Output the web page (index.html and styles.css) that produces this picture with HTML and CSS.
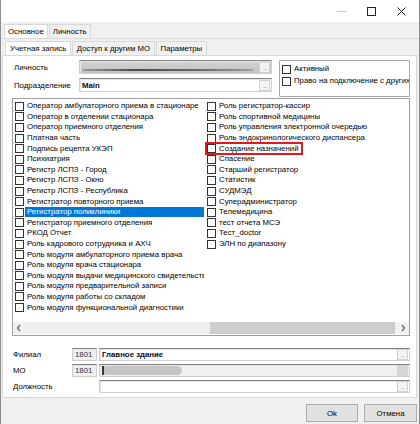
FILE: index.html
```html
<!DOCTYPE html>
<html lang="ru">
  <head>
    <meta charset="UTF-8" />
    <title>Пользователь</title>
    <link rel="stylesheet" href="styles.css">
  </head>
  <body>
    <div class="window">
      <div class="titlebar">
        <span class="wbtn"><svg viewBox="0 0 9 9"><path d="M0 4.5h9" stroke="#c4c4c4" /></svg></span>
        <span class="wbtn"><svg viewBox="0 0 9 9"><rect x="0.5" y="0.5" width="8" height="8" fill="none" stroke="#222" /></svg></span>
        <span class="wbtn"><svg viewBox="0 0 9 9"><path d="M0.5 0.5l8 8M8.5 0.5l-8 8" stroke="#222" /></svg></span>
      </div>

      <div class="tabs outer-tabs">
        <div class="tab active">Основное</div>
        <div class="tab">Личность</div>
      </div>

      <div class="outer-page">
        <div class="tabs inner-tabs">
          <div class="tab active">Учетная запись</div>
          <div class="tab">Доступ к другим МО</div>
          <div class="tab">Параметры</div>
        </div>

        <div class="page">
          <div class="top">
            <div class="fields">
              <div class="row">
                <label>Личность</label>
                <div class="field locked"><span class="smudge"></span><span class="dots">...</span></div>
              </div>
              <div class="row">
                <label>Подразделение</label>
                <div class="field"><b class="val">Main</b><span class="dots">...</span></div>
              </div>
            </div>
            <div class="flags">
              <div class="item"><i class="box"></i><span>Активный</span></div>
              <div class="item"><i class="box"></i><span>Право на подключение с других</span></div>
            </div>
          </div>

          <div class="list">
            <div class="cols">
              <div class="col first">
                <div class="item"><i class="box"></i><span>Оператор амбулаторного приема в стационаре</span></div>
                <div class="item"><i class="box"></i><span>Оператор в отделении стационара</span></div>
                <div class="item"><i class="box"></i><span>Оператор приемного отделения</span></div>
                <div class="item"><i class="box"></i><span>Платная часть</span></div>
                <div class="item"><i class="box"></i><span>Подпись рецепта УКЭП</span></div>
                <div class="item"><i class="box"></i><span>Психиатрия</span></div>
                <div class="item"><i class="box"></i><span>Регистр ЛСПЗ - Город</span></div>
                <div class="item"><i class="box"></i><span>Регистр ЛСПЗ - Окно</span></div>
                <div class="item"><i class="box"></i><span>Регистр ЛСПЗ - Республика</span></div>
                <div class="item"><i class="box"></i><span>Регистратор повторного приема</span></div>
                <div class="item selected"><i class="box"></i><span>Регистратор поликлиники</span></div>
                <div class="item"><i class="box"></i><span>Регистратор приемного отделения</span></div>
                <div class="item"><i class="box"></i><span>РКОД Отчет</span></div>
                <div class="item"><i class="box"></i><span>Роль кадрового сотрудника и АХЧ</span></div>
                <div class="item"><i class="box"></i><span>Роль модуля амбулаторного приема врача</span></div>
                <div class="item"><i class="box"></i><span>Роль модуля врача стационара</span></div>
                <div class="item"><i class="box"></i><span>Роль модуля выдачи медицинского свидетельства</span></div>
                <div class="item"><i class="box"></i><span>Роль модуля предварительной записи</span></div>
                <div class="item"><i class="box"></i><span>Роль модуля работы со складом</span></div>
                <div class="item"><i class="box"></i><span>Роль модуля функциональной диагностики</span></div>
              </div>
              <div class="col">
                <div class="item"><i class="box"></i><span>Роль регистратор-кассир</span></div>
                <div class="item"><i class="box"></i><span>Роль спортивной медицины</span></div>
                <div class="item"><i class="box"></i><span>Роль управления электронной очередью</span></div>
                <div class="item"><i class="box"></i><span>Роль эндокринологического диспансера</span></div>
                <div class="item marked"><i class="box"></i><span>Создание назначений</span></div>
                <div class="item"><i class="box"></i><span>Спасение</span></div>
                <div class="item"><i class="box"></i><span>Старший регистратор</span></div>
                <div class="item"><i class="box"></i><span>Статистик</span></div>
                <div class="item"><i class="box"></i><span>СУДМЭД</span></div>
                <div class="item"><i class="box"></i><span>Суперадминистратор</span></div>
                <div class="item"><i class="box"></i><span>Телемедицина</span></div>
                <div class="item"><i class="box"></i><span>тест отчета МСЭ</span></div>
                <div class="item"><i class="box"></i><span>Тест_doctor</span></div>
                <div class="item"><i class="box"></i><span>ЭЛН по диапазону</span></div>
              </div>
            </div>
            <div class="hscroll">
              <span class="arrow"><svg viewBox="0 0 6 8"><path d="M4 1L1.5 4 4 7" fill="none" stroke="#606060" stroke-width="1.2" /></svg></span>
              <span class="thumb"></span>
              <span class="arrow right"><svg viewBox="0 0 6 8"><path d="M2 1l2.5 3L2 7" fill="none" stroke="#606060" stroke-width="1.2" /></svg></span>
            </div>
          </div>

          <div class="refs">
            <div class="row">
              <label>Филиал</label>
              <div class="field code">1801</div>
              <div class="field name"><b class="val">Главное здание</b><span class="dots">...</span></div>
            </div>
            <div class="row">
              <label>МО</label>
              <div class="field code">1801</div>
              <div class="field name disabled"><span class="blob"></span><span class="dots filled"></span></div>
            </div>
            <div class="row">
              <label>Должность</label>
              <div class="code-gap"></div>
              <div class="field name"><span class="dots">...</span></div>
            </div>
          </div>
        </div>

        <div class="actions">
          <button>Ok</button>
          <button>Отмена</button>
        </div>
      </div>
    </div>
  </body>
</html>
```

FILE: styles.css
```css
* {
  margin: 0;
  padding: 0;
  box-sizing: border-box;
}

body {
  background: #fff;
  font-family: "Liberation Sans", Arial, sans-serif;
  font-size: 7.82px;
  color: #000;
}

.window {
  width: 420px;
  height: 424px;
  display: flex;
  flex-direction: column;
  background: #f0f0f0;
  border-left: 1px solid #8c8c8c;
  border-right: 1px solid #8c8c8c;
  overflow: hidden;
}

.titlebar {
  height: 22px;
  flex: none;
  background: #fff;
  display: flex;
  justify-content: flex-end;
  align-items: center;
  padding-right: 3px;
}

.wbtn {
  width: 30px;
  display: flex;
  justify-content: center;
}

.wbtn svg {
  width: 9px;
  height: 9px;
  display: block;
}

/* tabs */
.tabs {
  display: flex;
  align-items: flex-end;
  flex: none;
  gap: 1px;
}

.outer-tabs {
  height: 16px;
  padding-left: 3px;
}

.inner-tabs {
  height: 16px;
  padding-left: 4px;
}

.tab {
  height: 14px;
  padding: 0 3px;
  border: 1px solid #d9d9d9;
  border-bottom: none;
  background: #f0f0f0;
  line-height: 13px;
  white-space: nowrap;
}

.inner-tabs .tab {
  padding: 0 3.5px 0 4px;
}

.tab.active {
  background: #fff;
}

.outer-page {
  flex: 1;
  display: flex;
  flex-direction: column;
  border-top: 1px solid #d9d9d9;
}

.page {
  height: 343px;
  flex: none;
  margin: 0 2px 0 1px;
  background: #fff;
  border: 1px solid #d9d9d9;
  display: flex;
  flex-direction: column;
}

/* top fields */
.top {
  display: flex;
  height: 42px;
  flex: none;
  padding: 4px 0 0 11px;
}

.fields {
  display: flex;
  flex-direction: column;
  gap: 4px;
}

.row {
  display: flex;
  align-items: center;
  height: 14px;
}

.top .row label {
  width: 65px;
}

.field {
  display: flex;
  align-items: center;
  height: 14px;
  background: #fff;
  border: 1px solid #cfcfcf;
  border-top-color: #808080;
  box-shadow: inset 1px 1px 0 #e6e6e6;
  padding-left: 2px;
  white-space: nowrap;
  overflow: hidden;
}

.top .field {
  width: 193px;
}

.field.locked {
  background: linear-gradient(#d2d2d2, #c3c3c3);
}

.smudge {
  flex: 1;
  align-self: flex-end;
  height: 2px;
  margin: 0 6px 2px 1px;
  background: linear-gradient(90deg, #9a9a9a, #4a4a4a 30%, #6a6a6a 70%, #a0a0a0);
  filter: blur(0.6px);
}

.val {
  font-weight: 700;
  color: #0b0b1e;
}

.dots {
  margin-left: auto;
  margin-right: 1px;
  width: 11px;
  height: 11px;
  flex: none;
  border: 1px solid #d2d2d2;
  background: #f4f4f4;
  color: #9a9a9a;
  font-size: 7px;
  line-height: 9px;
  text-align: center;
  letter-spacing: -1px;
}

.dots.filled {
  background: #d6d6d6;
}

.flags {
  margin-left: 7px;
  width: 131px;
  height: 37px;
  border: 1px solid #a8a8a8;
  border-radius: 1px;
  background: #fff;
  overflow: hidden;
  padding: 2px 0 0 1px;
}

.flags .item {
  height: 12px;
}

/* checked list */
.list {
  margin-left: 9px;
  width: 398px;
  height: 238px;
  flex: none;
  border: 1px solid #a0a0a0;
  display: flex;
  flex-direction: column;
  padding: 2px 0 1px 1px;
}

.cols {
  display: flex;
}

.col {
  flex: 1;
}

.col.first {
  width: 192px;
  flex: none;
}

.item {
  height: 10.6px;
  display: flex;
  align-items: center;
  white-space: nowrap;
}

.box {
  width: 9px;
  height: 9px;
  flex: none;
  margin: 0 1px;
  border: 1px solid #333;
  background: #fff;
}

.item span {
  padding-left: 2px;
  line-height: 10px;
}

.col.first .item span {
  flex: 1;
  margin-right: 2px;
  overflow: hidden;
}

.item.selected span {
  background: #0078d7;
  color: #fff;
}

.item.marked {
  width: fit-content;
  padding-right: 3px;
  outline: 2px solid #e8141e;
  outline-offset: -1px;
}

.hscroll {
  margin: auto 0 0 -1px;
  height: 12px;
  flex: none;
  display: flex;
  align-items: center;
  background: #f0f0f0;
}

.arrow {
  width: 12px;
  display: flex;
  justify-content: center;
}

.arrow svg {
  width: 6px;
  height: 8px;
  display: block;
}

.arrow.right {
  margin-left: auto;
}

.thumb {
  margin-left: 185px;
  width: 185px;
  height: 12px;
  background: #cdcdcd;
}

/* bottom references */
.refs {
  display: flex;
  flex-direction: column;
  gap: 3px;
  padding: 12px 0 0 10px;
}

.refs .row {
  height: 13px;
}

.refs label {
  width: 59px;
}

.refs .field {
  height: 13px;
}

.field.code {
  width: 25px;
  margin-right: 2px;
  background: #f0f0f0;
  color: #333;
}

.code-gap {
  width: 27px;
}

.field.name {
  width: 311px;
}

.field.disabled {
  background: #f0f0f0;
}

.blob {
  position: relative;
  width: 80px;
  height: 9px;
  border-radius: 5px;
  background: #c4c4c4;
  filter: blur(0.4px);
}

.blob::before {
  content: "";
  position: absolute;
  left: 0;
  top: 0;
  width: 2px;
  height: 9px;
  background: #333;
}

/* dialog buttons */
.actions {
  flex: 1;
  display: flex;
  justify-content: flex-end;
  align-items: flex-start;
  gap: 6px;
  padding: 6px 2px 0 0;
}

.actions button {
  width: 52px;
  height: 18px;
  border: 1px solid #adadad;
  background: #e1e1e1;
  font: inherit;
  color: #000;
}

.actions button:last-child {
  width: 53px;
}
```
